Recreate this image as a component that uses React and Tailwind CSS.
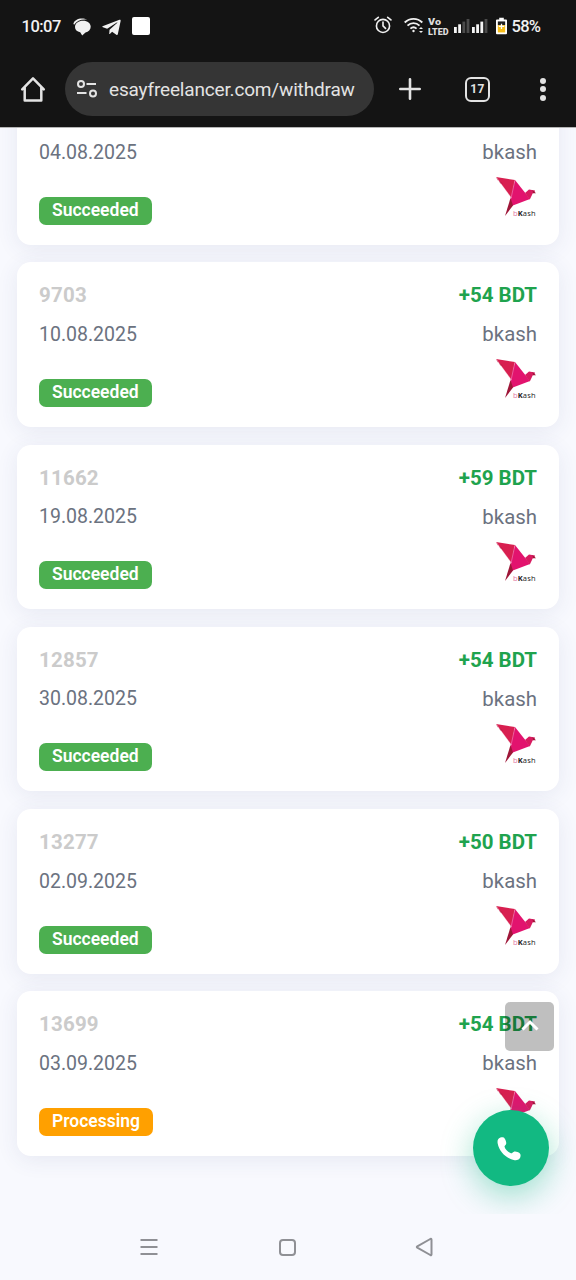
import { FaTelegramPlane } from "react-icons/fa";

const withdrawals = [
  { date: "04.08.2025", method: "bkash", status: "Succeeded" },
  { id: "9703", amount: "+54 BDT", date: "10.08.2025", method: "bkash", status: "Succeeded" },
  { id: "11662", amount: "+59 BDT", date: "19.08.2025", method: "bkash", status: "Succeeded" },
  { id: "12857", amount: "+54 BDT", date: "30.08.2025", method: "bkash", status: "Succeeded" },
  { id: "13277", amount: "+50 BDT", date: "02.09.2025", method: "bkash", status: "Succeeded" },
  { id: "13699", amount: "+54 BDT", date: "03.09.2025", method: "bkash", status: "Processing" },
];

const Signal = ({ level }) => (
  <svg viewBox="0 0 16 16" className="w-4 h-4">
    {[0, 1, 2, 3].map((i) => (
      <rect
        key={i}
        x={i * 4.2}
        y={[9, 6.3, 3.6, 1][i]}
        width="2.8"
        height={[6, 8.7, 11.4, 14][i]}
        fill={i < level ? "#f5f5f5" : "#4b4b4b"}
      />
    ))}
  </svg>
);

const StatusBar = () => (
  <div className="h-[54px] flex items-center pl-[21.5px] pr-9 text-[#f1f1f1]">
    <span className="text-[16.5px] font-medium tracking-[-0.5px] w-[51px]">10:07</span>
    <svg viewBox="0 0 18 18" className="w-[18px] h-[18px]" fill="currentColor">
      <path d="M10 2.8c4.6 0 7.7 2.6 7.7 6 0 3-2.2 5-5.2 5.6L9.2 17.5 7.2 14.2C4 13.4 2 11.700 2 8.900 2 5.300 5.600 2.800 10 2.800z" />
      <path d="M.4 5.800C1.300 .6 9.500-1 14.200 1.700 8.600 1 4 2.500 1.100 6.800z" />
    </svg>
    <FaTelegramPlane className="ml-2.5 w-[21px] h-[21px]" />
    <div className="ml-[10px] w-[18px] h-[18px] -mt-0.5 rounded-[2px] bg-white" />
    <svg viewBox="0 0 20 20" className="ml-auto w-[18px] h-[18px] -mt-1" fill="none" stroke="currentColor" strokeWidth="1.8" strokeLinecap="round">
      <circle cx="10" cy="11" r="7.3" />
      <path d="M10 6.700V11l2.800 2.800M1.200 4.400l3.600-3M18.800 4.400l-3.600-3" />
    </svg>
    <svg viewBox="0 0 20 17" className="ml-[12px] w-5 h-[17px] -mt-1" fill="none" stroke="currentColor" strokeWidth="1.9">
      <path d="M.7 5.500c5-4.900 12.700-4.900 17.600 0M3.500 8.600c3.500-3.300 8.500-3.300 12 0M6.400 11.600c1.800-1.600 4.400-1.600 6.200 0" />
      <circle cx="9.500" cy="14" r="1.200" fill="currentColor" stroke="none" />
      <path d="M15 12l2-2 2 2zM15 14l2 2 2-2z" fill="currentColor" stroke="none" />
    </svg>
    <svg viewBox="0 0 22 26" className="ml-[4px] w-[22px] h-[26px] -mt-0.5" fill="#dcdcdc" fontFamily="Roboto, sans-serif" fontWeight="900">
      <text x="0" y="11.5" fontSize="9.5" textLength="13" lengthAdjust="spacingAndGlyphs">Vo</text>
      <text x="0" y="21.5" fontSize="9.5" textLength="20.5" lengthAdjust="spacingAndGlyphs">LTED</text>
    </svg>
    <div className="ml-[3.5px] -mt-0.5 flex gap-[2px]">
      <Signal level={2} />
      <Signal level={3} />
    </div>
    <svg viewBox="0 0 12 18" className="ml-[8px] w-[11px] h-[18px] -mt-0.5">
      <path d="M3.500 0h5v2H11a1 1 0 0 1 1 1v14a1 1 0 0 1-1 1H1a1 1 0 0 1-1-1V3a1 1 0 0 1 1-1h2.500z" fill="#fff" />
      <path d="M2 4h8v4H2z" fill="#202020" />
      <path d="M2 8h8v8H2z" fill="#f6bd19" />
      <path d="M5.300 6.500h1.400v2.200H9v1.400H6.700v2.200H5.300v-2.200H3V8.700h2.300z" fill="#fff" />
    </svg>
    <span className="ml-[5px] text-[16.5px] font-medium tracking-[-0.7px] w-[28.5px]">58%</span>
  </div>
);

const BrowserBar = () => (
  <div className="h-[73px] flex items-center pb-[3px] text-[#e3e3e3]">
    <svg viewBox="0 0 26 26" className="ml-5 w-[26px] h-[26px]" fill="none" stroke="currentColor" strokeWidth="2.5" strokeLinejoin="round" strokeLinecap="round">
      <path d="M2.200 13.300L13 2.300l10.800 11M4.700 11.500v13h16.600v-13" />
    </svg>
    <div className="ml-[19px] w-[309px] h-[54px] rounded-full bg-[#353535] flex items-center pl-3">
      <svg viewBox="0 0 20 18" className="w-5 h-[18px]" fill="none" stroke="currentColor" strokeWidth="2">
        <circle cx="4" cy="4" r="3" />
        <path d="M9.500 4H19M0 13H9.500" />
        <circle cx="16" cy="13.500" r="3" />
      </svg>
      <span className="ml-3 mt-0.5 text-[19px] tracking-[-0.17px] whitespace-nowrap">esayfreelancer.com/withdraw</span>
    </div>
    <svg viewBox="0 0 22 22" className="ml-[25px] w-[22px] h-[22px]" fill="none" stroke="currentColor" strokeWidth="2.6" strokeLinecap="round">
      <path d="M11 1.300v19.400M1.300 11h19.400" />
    </svg>
    <div className="ml-[44px] w-[25px] h-[25px] rounded-[6px] border-[2.5px] border-[#e3e3e3] flex items-center justify-center text-[12px] font-bold tracking-[0.4px]">
      17
    </div>
    <div className="ml-[50px] flex flex-col gap-[2.5px]">
      <div className="w-[6px] h-[6px] rounded-full bg-[#e3e3e3]" />
      <div className="w-[6px] h-[6px] rounded-full bg-[#e3e3e3]" />
      <div className="w-[6px] h-[6px] rounded-full bg-[#e3e3e3]" />
    </div>
  </div>
);

const BkashLogo = () => (
  <svg viewBox="0 0 42 42" className="w-[42px] h-[42px] mt-[9px]">
    <path d="M1 1L20 4 16.500 22z" fill="#d81f50" />
    <path d="M1 1L5.500 7.500 8 7.500 2.500 4z" fill="#b91642" />
    <path d="M20 4L35 23 16.500 30 15.500 21z" fill="#e2136e" />
    <path d="M30 17L34 13.500 40 14.500 39.500 16.800 37.800 17.300 34.800 23.500z" fill="#d81b60" />
    <path d="M37.500 14L41 17.200 38 17.200z" fill="#9e1638" />
    <path d="M15.500 22L18 29.500 10 40z" fill="#9e1638" />
    <path d="M20 4L16 22.500M1 1L16.500 22" fill="none" stroke="#fff" strokeWidth=".6" opacity=".5" />
    <text x="18" y="39.500" fontSize="7.500" fontFamily="Open Sans, sans-serif" textLength="22.500" fill="#222">
      <tspan fill="#e2739f">b</tspan>
      <tspan fontWeight="700">K</tspan>ash
    </text>
  </svg>
);

const WithdrawCard = ({ item }) => (
  <div className="h-[164.5px] shrink-0 rounded-[14px] bg-white px-[22px] pt-[18px] flex justify-between shadow-[0_4px_22px_rgba(60,65,125,0.09)]">
    <div className="flex flex-col items-start">
      <p className="h-[30px] text-[20.5px] leading-[30px] font-bold tracking-[0.2px] text-[#cbcbcb]">{item.id}</p>
      <p className="mt-[9.5px] text-[19.5px] leading-[30px] text-[#6b7280]">{item.date}</p>
      <span
        className={`mt-[29px] h-7 px-[13px] rounded-[7px] text-[17.5px] leading-[27px] font-semibold text-white ${
          item.status === "Succeeded" ? "bg-[#4caf50]" : "bg-[#ffa000]"
        }`}
      >
        {item.status}
      </span>
    </div>
    <div className="flex flex-col items-end">
      <p className="h-[30px] text-[20.5px] leading-[30px] font-bold text-[#1fa34e]">{item.amount}</p>
      <p className="mt-[9px] text-[20.4px] leading-[30px] text-[#6b7280]">{item.method}</p>
      <BkashLogo />
    </div>
  </div>
);

const App = () => {
  return (
    <div className="w-[576px] h-[1280px] relative overflow-hidden flex flex-col bg-[#f8f9fe] font-[Roboto,sans-serif]">
      <header className="shrink-0 h-32 bg-[#141414] border-b border-[#b5b5b5]">
        <StatusBar />
        <BrowserBar />
      </header>

      <main className="h-[1086px] shrink-0 overflow-hidden relative">
        <div className="-mt-[48px] px-[17px] flex flex-col gap-[17.8px]">
          {withdrawals.map((item) => (
            <WithdrawCard key={item.date} item={item} />
          ))}
        </div>

        {/* floating buttons */}
        <button className="absolute left-[505px] top-[874px] w-[49px] h-[49px] rounded-[5px] bg-black/25 flex items-center justify-center">
          <svg viewBox="0 0 18 12" className="w-[18px] h-3 mb-[3px]" fill="none" stroke="#fff" strokeWidth="3">
            <path d="M1.500 10.500L9 3l7.500 7.500" />
          </svg>
        </button>
        <button className="absolute left-[473px] top-[982px] w-[76px] h-[76px] rounded-full bg-[#12b982] flex items-center justify-center shadow-[0_10px_32px_rgba(16,185,129,0.4)]">
          <svg viewBox="0 0 24 24" className="w-6 h-6 mr-1 mt-0.5" fill="#fff">
            <path d="M1.800 1.600C3.500.2 6.500-.2 7.600 1.400c1.300 1.900 2.200 4.500 1.300 6.100-.5 1-1.600 1.500-1.300 2.500.7 2.500 3.800 5.600 6.400 6.200 1.100.3 1.600-.9 2.600-1.300 1.800-.8 4.500.2 6.100 1.400 1.400 1.100 1 3.700-.1 5.300-1 1.600-3.300 1.900-5 1.600C9.300 21.900 2.200 14.600.7 6.600.4 4.900.4 2.700 1.800 1.600z" />
          </svg>
        </button>
      </main>

      <nav className="h-[66px] shrink-0 flex items-center bg-[#f8f9fe] text-[#8f9095]">
        <svg viewBox="0 0 18 18" className="ml-[140px] w-[18px] h-[18px]" fill="none" stroke="currentColor" strokeWidth="2">
          <path d="M.5 2h17M.5 9h17M.5 16h17" />
        </svg>
        <div className="ml-[121px] w-[17px] h-[17px] rounded-[4px] border-2 border-[#8f9095]" />
        <svg viewBox="0 0 18 20" className="ml-[119px] w-[18px] h-5" fill="none" stroke="currentColor" strokeWidth="2" strokeLinejoin="round">
          <path d="M2.300 9.300L15.300 2q1.200-.5 1.200.8v14.400q0 1.300-1.200.8L2.300 10.700q-1-.7 0-1.400z" />
        </svg>
      </nav>
    </div>
  );
};

export default App;
